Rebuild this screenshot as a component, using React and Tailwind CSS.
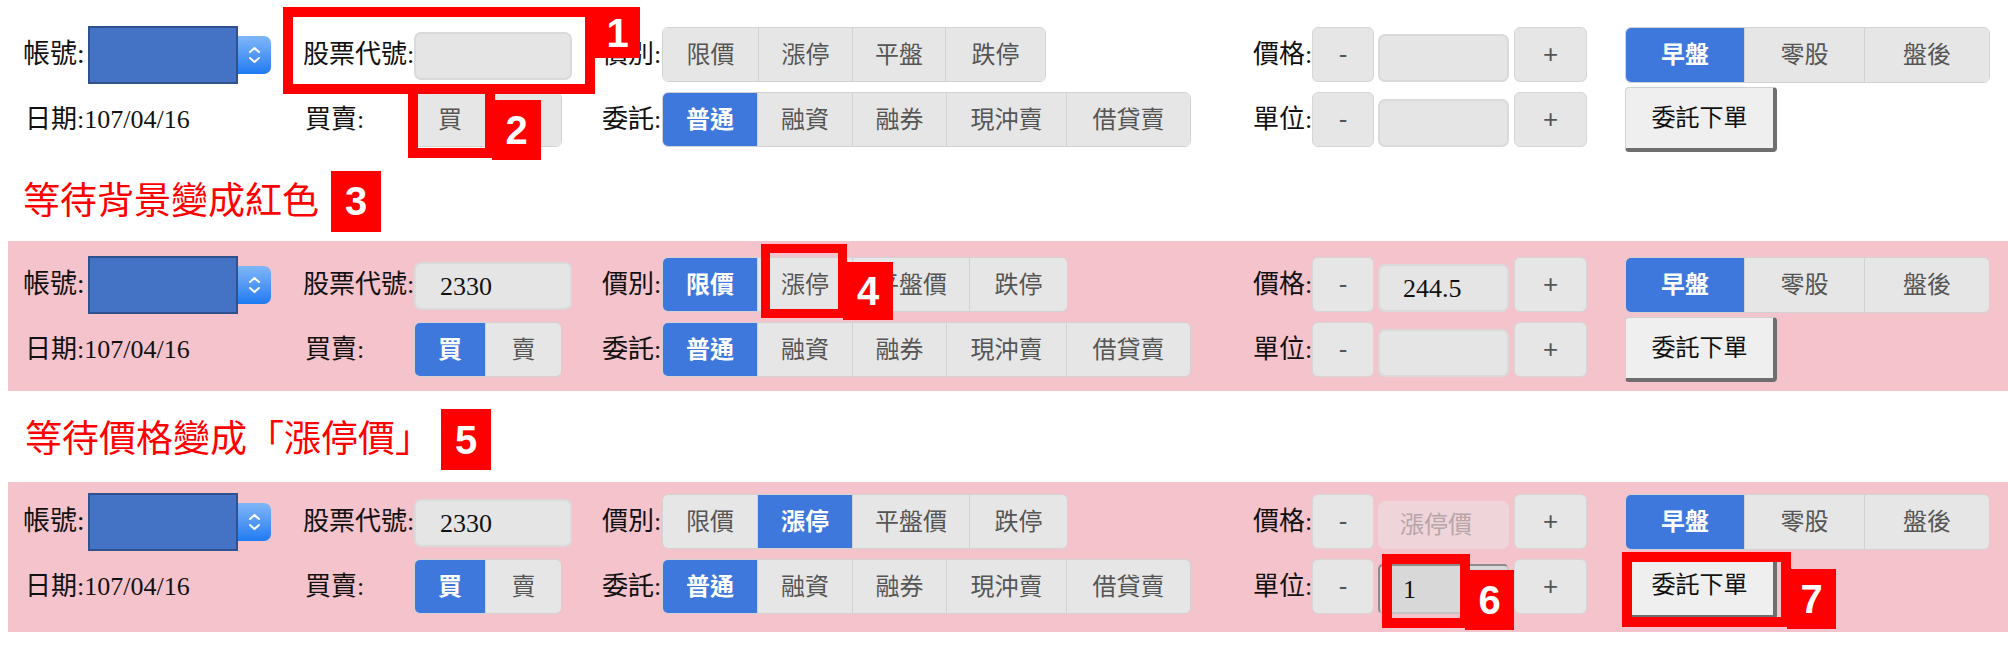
import React from "react";

const SERIF = "font-['Liberation_Serif','Noto_Sans_CJK_TC',serif]";
const SANS = "font-['Liberation_Sans','Noto_Sans_CJK_TC',sans-serif]";
const LBL = `${SERIF} text-[26px] text-[#111] leading-none whitespace-nowrap shrink-0`;

function Seg({ items, widths, active, h }) {
  return (
    <div className={`flex shrink-0 ${h} rounded-[6px] border border-[#d2d2d2] overflow-hidden ${SANS}`}>
      {items.map((t, i) => (
        <div
          key={i}
          className={[
            "flex items-center justify-center text-[24px] h-full whitespace-nowrap shrink-0",
            widths[i],
            i > 0 ? "border-l border-[#d2d2d2]" : "",
            i === active ? "bg-[#3f78dc] text-white font-bold" : "bg-[#e6e6e6] text-[#555]",
          ].join(" ")}
        >
          {t}
        </div>
      ))}
    </div>
  );
}

function Arrow() {
  return (
    <div className="w-[33px] h-[38px] shrink-0 rounded-r-[7px] bg-linear-to-b from-[#7fb6f7] to-[#1c7af2] flex items-center justify-center">
      <svg width="33" height="38" viewBox="0 0 33 38">
        <path d="M12 16 L16.5 12 L21 16" stroke="white" strokeWidth="2" fill="none" strokeLinecap="round" strokeLinejoin="round" />
        <path d="M12 22 L16.5 26 L21 22" stroke="white" strokeWidth="2" fill="none" strokeLinecap="round" strokeLinejoin="round" />
      </svg>
    </div>
  );
}

function PmBtn({ children, w }) {
  return (
    <div className={`h-[55px] shrink-0 ${w} rounded-[6px] border border-[#d6d6d6] bg-[#e6e6e6] text-[#555] flex items-center justify-center text-[26px] ${SANS}`}>
      {children}
    </div>
  );
}

function Panel({ v, className }) {
  const priceItems = v === 1 ? ["限價", "漲停", "平盤", "跌停"] : ["限價", "漲停", "平盤價", "跌停"];
  const priceW = v === 1 ? ["w-[95px]", "w-[94px]", "w-[93px]", "w-[100px]"] : ["w-[94px]", "w-[95px]", "w-[117px]", "w-[98px]"];
  const priceActive = v === 1 ? -1 : v === 2 ? 0 : 1;
  return (
    <div className={`ml-[8px] flex pl-[15px] ${className}`}>
      {/* col 1 */}
      <div className="w-[280px] shrink-0 grid grid-rows-[55px_55px] gap-y-[10px]">
        <div className="flex items-center">
          <span className={`${LBL} text-[27px] w-[65px]`}>帳號:</span>
          <div className="w-[150px] h-[58px] shrink-0 bg-[#4472c4] border-2 border-[#2f528f]" />
          <Arrow />
        </div>
        <div className="flex items-center">
          <span className={`${LBL} ml-[2px]`}>日期:107/04/16</span>
        </div>
      </div>
      {/* col 2 */}
      <div className="w-[299px] shrink-0 grid grid-rows-[55px_55px] gap-y-[10px]">
        <div className="flex items-center">
          <span className={`${LBL} w-[111px]`}>股票代號:</span>
          <div className={`w-[158px] h-[48px] shrink-0 mt-[3px] rounded-[7px] border-2 border-[#dadada] bg-[#e5e5e5] flex items-center pl-[24px] ${SERIF} text-[26px] text-[#111]`}>
            {v === 1 ? "" : "2330"}
          </div>
        </div>
        <div className="flex items-center">
          <span className={`${LBL} w-[111px] pl-[2px]`}>買賣:</span>
          <Seg items={["買", "賣"]} widths={["w-[70px]", "w-[76px]"]} active={v === 1 ? -1 : 0} h="h-[55px]" />
        </div>
      </div>
      {/* col 3 */}
      <div className="w-[651px] shrink-0 grid grid-rows-[55px_55px] gap-y-[10px]">
        <div className="flex items-center">
          <span className={`${LBL} w-[60px]`}>價別:</span>
          <Seg items={priceItems} widths={priceW} active={priceActive} h="h-[55px]" />
        </div>
        <div className="flex items-center">
          <span className={`${LBL} w-[60px]`}>委託:</span>
          <Seg
            items={["普通", "融資", "融券", "現沖賣", "借貸賣"]}
            widths={["w-[94px]", "w-[95px]", "w-[94px]", "w-[120px]", "w-[124px]"]}
            active={0}
            h="h-[55px]"
          />
        </div>
      </div>
      {/* col 4 */}
      <div className="w-[372px] shrink-0 grid grid-rows-[55px_55px] gap-y-[10px]">
        <div className="flex items-center">
          <span className={`${LBL} w-[59px]`}>價格:</span>
          <PmBtn w="w-[62px]">-</PmBtn>
          {v === 3 ? (
            <div className={`ml-[4px] self-end shrink-0 w-[131px] h-[48px] rounded-[7px] bg-[#efd4d9] flex items-center pl-[22px] text-[24px] text-[#b7a5a9] ${SANS}`}>
              漲停價
            </div>
          ) : (
            <div className={`ml-[4px] self-end shrink-0 w-[131px] h-[48px] rounded-[7px] border-2 border-[#dadada] bg-[#e5e5e5] flex items-center pl-[23px] ${SERIF} text-[26px] text-[#111]`}>
              {v === 2 ? "244.5" : ""}
            </div>
          )}
          <div className="ml-[5px]">
            <PmBtn w="w-[73px]">+</PmBtn>
          </div>
        </div>
        <div className="flex items-center">
          <span className={`${LBL} w-[59px]`}>單位:</span>
          <PmBtn w="w-[62px]">-</PmBtn>
          {v === 3 ? (
            <div className={`ml-[4px] self-end shrink-0 w-[131px] h-[50px] rounded-[5px] border-2 border-t-[#8c8c8c] border-l-[#8c8c8c] border-r-[#c4c4c4] border-b-[#c4c4c4] bg-[#d8d8d8] flex items-center pl-[23px] ${SERIF} text-[26px] text-[#111]`}>
              1
            </div>
          ) : (
            <div className="ml-[4px] self-end shrink-0 w-[131px] h-[48px] rounded-[7px] border-2 border-[#dadada] bg-[#e5e5e5]" />
          )}
          <div className="ml-[5px]">
            <PmBtn w="w-[73px]">+</PmBtn>
          </div>
        </div>
      </div>
      {/* col 5 */}
      <div className="grid grid-rows-[55px_55px] gap-y-[10px]">
        <div className="flex items-center">
          <Seg items={["早盤", "零股", "盤後"]} widths={["w-[118px]", "w-[120px]", "w-[125px]"]} active={0} h="h-[56px]" />
        </div>
        <div className="flex items-center">
          <div className={`w-[152px] h-[65px] shrink-0 rounded-[4px] bg-[#efefef] border border-[#d0d0d0] border-r-[4px] border-b-[4px] border-r-[#6e6e6e] border-b-[#6e6e6e] flex items-center justify-center text-[24px] text-[#111] ${SANS}`}>
            委託下單
          </div>
        </div>
      </div>
    </div>
  );
}

function Box({ className }) {
  return <div className={`absolute border-[#ff0000] ${className}`} />;
}

function Badge({ n, className }) {
  return (
    <div className={`absolute bg-[#ff0000] text-white font-bold text-[40px] leading-none flex items-center justify-center ${SANS} ${className}`}>
      {n}
    </div>
  );
}

export default function App() {
  return (
    <div className="relative w-[2008px] h-[645px] bg-white overflow-hidden">
      <div className="flex flex-col">
        <Panel v={1} className="mt-[10px] pt-[17px] pb-[14px]" />
        <div className="h-[80px] flex items-center pl-[23px]">
          <span className={`text-[37px] leading-none text-[#ff0000] whitespace-nowrap ${SANS}`}>等待背景變成紅色</span>
          <div className={`ml-[12px] w-[50px] h-[61px] bg-[#ff0000] text-white font-bold text-[40px] flex items-center justify-center ${SANS}`}>3</div>
        </div>
        <Panel v={2} className="bg-[#f4c3cb] pt-[16px] pb-[14px]" />
        <div className="h-[91px] flex items-center pl-[25px] pt-[6px]">
          <span className={`text-[37px] leading-none text-[#ff0000] whitespace-nowrap ${SANS}`}>等待價格變成「漲停價」</span>
          <div className={`ml-[9px] w-[50px] h-[61px] bg-[#ff0000] text-white font-bold text-[40px] flex items-center justify-center ${SANS}`}>5</div>
        </div>
        <Panel v={3} className="bg-[#f4c3cb] pt-[12px] pb-[18px]" />
      </div>

      <Box className="left-[283px] top-[7px] w-[312px] h-[87px] border-[10px]" />
      <Badge n="1" className="left-[595px] top-[7px] w-[45px] h-[51px]" />
      <Box className="left-[408px] top-[84px] w-[87px] h-[74px] border-[10px]" />
      <Badge n="2" className="left-[492px] top-[100px] w-[49px] h-[60px]" />
      <Box className="left-[761px] top-[244px] w-[86px] h-[74px] border-[9px]" />
      <Badge n="4" className="left-[843px] top-[262px] w-[50px] h-[58px]" />
      <Box className="left-[1382px] top-[554px] w-[88px] h-[74px] border-[10px]" />
      <Badge n="6" className="left-[1465px] top-[570px] w-[49px] h-[60px]" />
      <Box className="left-[1622px] top-[552px] w-[169px] h-[75px] border-[10px]" />
      <Badge n="7" className="left-[1787px] top-[569px] w-[49px] h-[60px]" />
    </div>
  );
}
